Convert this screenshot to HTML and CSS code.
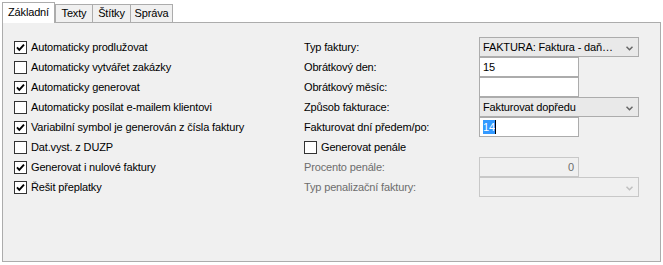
FILE: index.html
```html
<!DOCTYPE html>
<html lang="cs">
<head>
    <meta charset="UTF-8">
    <meta name="viewport" content="width=device-width, initial-scale=1.0">
    <title>Nastavení fakturace</title>
    <link rel="stylesheet" href="styles.css">
</head>
<body>
    <div class="tab-control">
        <div class="tabs">
            <div class="tab active">Základní</div>
            <div class="tab t-texty">Texty</div>
            <div class="tab t-stitky">Štítky</div>
            <div class="tab t-sprava">Správa</div>
        </div>
        <div class="tab-page">
            <div class="col-left">
                <div class="check"><span class="box"><svg viewBox="0 0 11 11"><path d="M2 5.3 L4.3 7.8 L9 2.6"/></svg></span>Automaticky prodlužovat</div>
                <div class="check"><span class="box"></span>Automaticky vytvářet zakázky</div>
                <div class="check"><span class="box"><svg viewBox="0 0 11 11"><path d="M2 5.3 L4.3 7.8 L9 2.6"/></svg></span>Automaticky generovat</div>
                <div class="check"><span class="box"></span>Automaticky posílat e-mailem klientovi</div>
                <div class="check"><span class="box"><svg viewBox="0 0 11 11"><path d="M2 5.3 L4.3 7.8 L9 2.6"/></svg></span>Variabilní symbol je generován z čísla faktury</div>
                <div class="check"><span class="box"></span>Dat.vyst. z DUZP</div>
                <div class="check"><span class="box"><svg viewBox="0 0 11 11"><path d="M2 5.3 L4.3 7.8 L9 2.6"/></svg></span>Generovat i nulové faktury</div>
                <div class="check"><span class="box"><svg viewBox="0 0 11 11"><path d="M2 5.3 L4.3 7.8 L9 2.6"/></svg></span>Řešit přeplatky</div>
            </div>
            <div class="col-right">
                <span class="lbl">Typ faktury:</span>
                <div class="combo"><span>FAKTURA: Faktura - daň…</span><svg class="arrow" viewBox="0 0 7 5"><path d="M0.5 0.8 L3.5 3.8 L6.5 0.8"/></svg></div>

                <span class="lbl">Obrátkový den:</span>
                <div class="field">15</div>

                <span class="lbl">Obrátkový měsíc:</span>
                <div class="field"></div>

                <span class="lbl">Způsob fakturace:</span>
                <div class="combo"><span>Fakturovat dopředu</span><svg class="arrow" viewBox="0 0 7 5"><path d="M0.5 0.8 L3.5 3.8 L6.5 0.8"/></svg></div>

                <span class="lbl">Fakturovat dní předem/po:</span>
                <div class="field"><span class="selected">14</span><span class="caret"></span></div>

                <div class="check wide"><span class="box"></span>Generovat penále</div>

                <span class="lbl disabled">Procento penále:</span>
                <div class="field disabled number">0</div>

                <span class="lbl disabled">Typ penalizační faktury:</span>
                <div class="combo disabled"><span></span><svg class="arrow" viewBox="0 0 7 5"><path d="M0.5 0.8 L3.5 3.8 L6.5 0.8"/></svg></div>
            </div>
        </div>
    </div>
</body>
</html>
```

FILE: styles.css
```css
body {
    margin: 0;
    background-color: #fff;
    font-family: "Liberation Sans", Arial, sans-serif;
    font-size: 11px;
    letter-spacing: -0.15px;
    color: #000;
}

.tab-control {
    margin: 2px 2px 0 2px;
}

.tabs {
    display: flex;
    align-items: flex-end;
    height: 20px;
}

.tab {
    box-sizing: border-box;
    height: 18px;
    line-height: 16px;
    background-color: #f0f0f0;
    border: 1px solid #acacac;
    border-bottom: none;
    margin-left: -1px;
    text-align: center;
}

.t-texty {
    width: 38px;
    margin-left: 0;
}

.t-stitky {
    width: 39px;
}

.t-sprava {
    width: 43px;
}

.tab.active {
    position: relative;
    z-index: 1;
    width: 53px;
    height: 21px;
    line-height: 19px;
    margin-left: 0;
    margin-right: 0;
    margin-bottom: -1px;
    background-color: #fff;
}

.tab-page {
    box-sizing: border-box;
    display: flex;
    height: 240px;
    padding: 14px 0 0 11px;
    background-color: #f0f0f0;
    border: 1px solid #acacac;
}

.col-left {
    width: 290px;
}

.check {
    display: flex;
    align-items: center;
    height: 20px;
}

.box {
    box-sizing: border-box;
    width: 13px;
    height: 13px;
    margin-right: 4px;
    background-color: #fff;
    border: 1px solid #333;
    display: flex;
    align-items: center;
    justify-content: center;
}

.box svg {
    width: 11px;
    height: 11px;
}

.box path {
    fill: none;
    stroke: #000;
    stroke-width: 1.9;
}

.col-right {
    display: grid;
    grid-template-columns: 175px 160px;
    grid-auto-rows: 20px;
}

.lbl {
    display: flex;
    align-items: center;
}

.check.wide {
    grid-column: 1 / 3;
}

.combo,
.field {
    box-sizing: border-box;
    height: 20px;
    display: flex;
    align-items: center;
    padding: 0 3px;
}

.combo {
    width: 160px;
    justify-content: space-between;
    background-color: #e9e9e9;
    border: 1px solid #acacac;
}

.combo .arrow {
    width: 7px;
    height: 5px;
    margin-right: 2px;
    margin-top: 2px;
}

.combo .arrow path {
    fill: none;
    stroke: #666;
    stroke-width: 1.5;
}

.field {
    width: 100px;
    background-color: #fff;
    border: 1px solid #acacac;
}

.selected {
    background-color: #3399ff;
    color: #fff;
    line-height: 14px;
}

.caret {
    width: 1px;
    height: 14px;
    background-color: #000;
}

.lbl.disabled {
    color: #6d6d6d;
}

.field.disabled {
    background-color: #f0f0f0;
    border-color: #c8c8c8;
    color: #6d6d6d;
}

.field.number {
    justify-content: flex-end;
    padding-right: 4px;
}

.combo.disabled {
    background-color: #f0f0f0;
    border-color: #c8c8c8;
}

.combo.disabled .arrow path {
    stroke: #bfbfbf;
}
```
